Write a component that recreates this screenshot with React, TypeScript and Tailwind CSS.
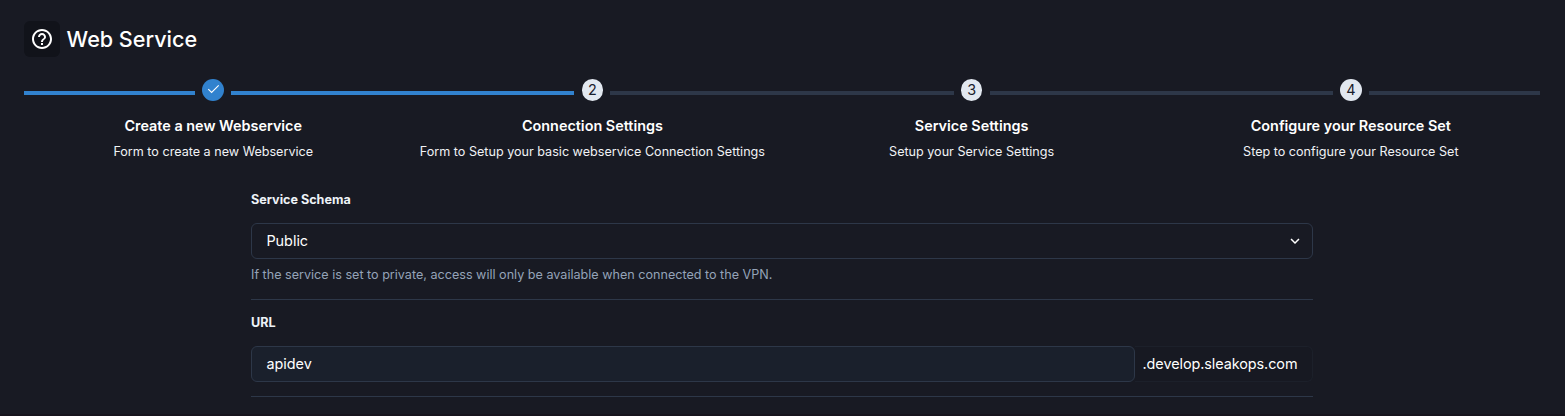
import React from "react";

type Step = {
  title: string;
  description: string;
  done?: boolean;
  left: string;
  right: string;
};

const BLUE = "bg-[#3182ce]";
const GRAY = "bg-[#2d3748]";

const steps: Step[] = [
  { title: "Create a new Webservice", description: "Form to create a new Webservice", done: true, left: BLUE, right: BLUE },
  { title: "Connection Settings", description: "Form to Setup your basic webservice Connection Settings", left: BLUE, right: GRAY },
  { title: "Service Settings", description: "Setup your Service Settings", left: GRAY, right: GRAY },
  { title: "Configure your Resource Set", description: "Step to configure your Resource Set", left: GRAY, right: GRAY },
];

function HelpIcon() {
  return (
    <svg width="24" height="24" viewBox="0 0 24 24" fill="currentColor" aria-hidden="true">
      <path d="M11 18h2v-2h-2v2zm1-16C6.48 2 2 6.48 2 12s4.48 10 10 10 10-4.48 10-10S17.52 2 12 2zm0 18c-4.41 0-8-3.59-8-8s3.59-8 8-8 8 3.59 8 8-3.59 8-8 8zm0-14c-2.21 0-4 1.79-4 4h2c0-1.1.9-2 2-2s2 .9 2 2c0 2-3 1.75-3 5h2c0-2.25 3-2.5 3-5 0-2.21-1.79-4-4-4z" />
    </svg>
  );
}

function StepItem({ step, index }: { step: Step; index: number }) {
  return (
    <li className="flex flex-1 flex-col items-center">
      <div className="flex h-[22px] w-full items-start gap-[7.2px]">
        <div className={`mt-3 h-1 flex-1 ${step.left}`} />
        {step.done ? (
          <div className="flex h-[21.6px] w-[21.6px] items-center justify-center rounded-full bg-[#3182ce] text-white">
            <svg width="13" height="13" viewBox="0 0 13 13" fill="none" stroke="currentColor" strokeWidth="1.1" aria-hidden="true">
              <path d="M1.3 6.2 4.6 9.5 11.7 2.4" />
            </svg>
          </div>
        ) : (
          <div className="flex h-[21.6px] w-[21.6px] items-center justify-center rounded-full bg-[#e2e8f0] text-[14.4px] leading-[21.6px] text-[#1a202c]">
            {index + 1}
          </div>
        )}
        <div className={`mt-3 h-1 flex-1 ${step.right}`} />
      </div>
      <h2 className="mt-[14px] text-[14.4px] leading-[22px] font-semibold text-white">{step.title}</h2>
      <p className="mt-[5px] text-[12.6px] leading-[19px] text-[#f0f2f5]">{step.description}</p>
    </li>
  );
}

export default function App() {
  return (
    <main className="h-[416px] border-b-2 border-[#16141d] bg-[#181a23] pr-[25px] pl-6 font-['Inter',sans-serif] text-white">
      <header className="flex items-center gap-[6.6px] pt-[21px]">
        <div className="flex h-9 w-9 items-center justify-center rounded-[6px] bg-[#11131a]">
          <HelpIcon />
        </div>
        <h1 className="text-[21.6px] leading-9 font-[460] tracking-[-0.02px]">Web Service</h1>
      </header>

      <ol className="-mx-[0.4px] mt-[22px] flex">
        {steps.map((step, index) => (
          <StepItem key={step.title} step={step} index={index} />
        ))}
      </ol>

      <form className="mr-[227px] ml-[227px]">
        <section className="border-b border-[#2d3748] pt-[29px] pb-[15px]">
          <div className="text-[12.6px] leading-[19px] font-bold text-[#edf2f7]">Service Schema</div>
          <div className="mt-[14px] flex h-9 items-center justify-between rounded-[6px] border border-[#2d3748] pr-2 pl-[14.4px]">
            <span className="text-[14.4px]">Public</span>
            <svg width="18" height="18" viewBox="0 0 24 24" fill="currentColor" aria-hidden="true">
              <path d="M16.59 8.59 12 13.17 7.41 8.59 6 10l6 6 6-6z" />
            </svg>
          </div>
          <p className="mt-[6px] text-[12.6px] leading-[19px] text-[#94a3b8]">
            If the service is set to private, access will only be available when connected to the VPN.
          </p>
        </section>

        <section className="border-b border-[#2d3748] pt-[13px] pb-[14px]">
          <div className="text-[12.6px] leading-[19px] font-bold text-[#edf2f7]">URL</div>
          <div className="mt-[14px] flex h-9">
            <div className="flex flex-1 items-center rounded-[6px] border border-[#2d3748] bg-[#1a202c] pl-[14.4px] text-[14.4px]">
              apidev
            </div>
            <div className="flex w-[178px] items-center rounded-r-[6px] border border-l-0 border-[#1c202a] bg-[#171922] pl-[7.5px] text-[14.4px] tracking-[-0.06px]">
              .develop.sleakops.com
            </div>
          </div>
        </section>
      </form>
    </main>
  );
}
